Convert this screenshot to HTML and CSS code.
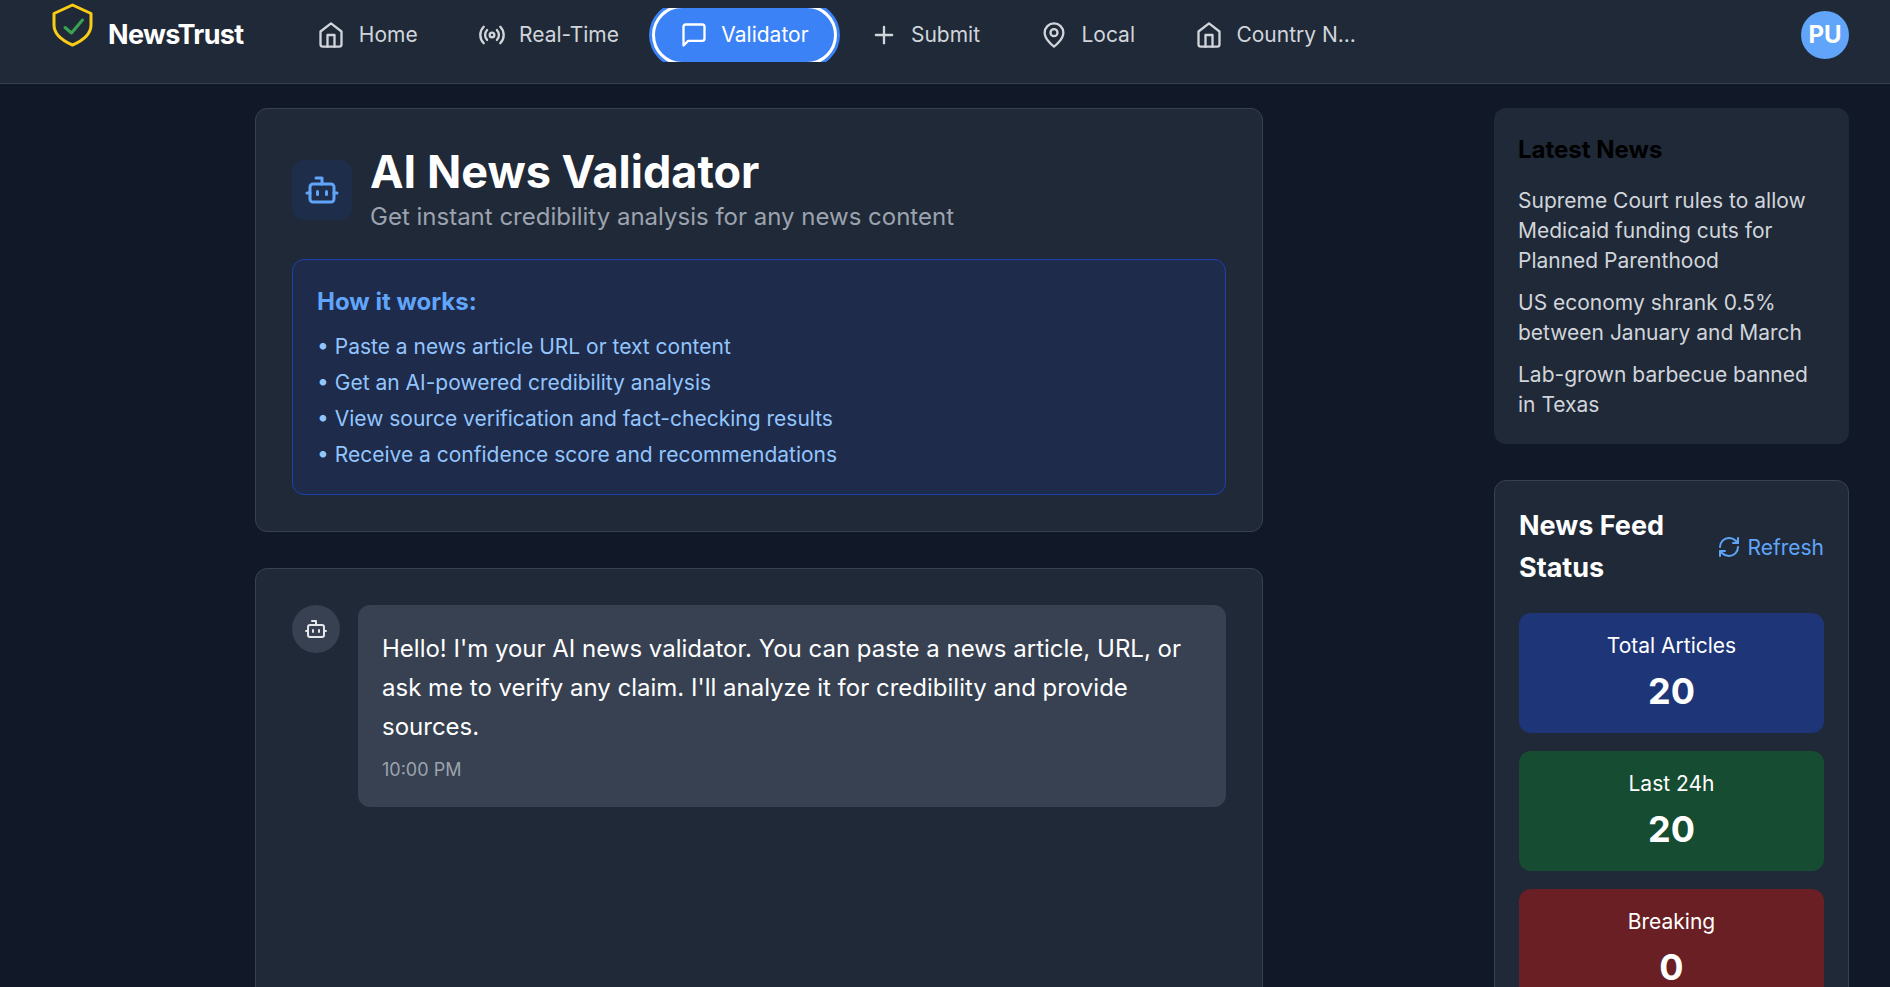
FILE: index.html
```html
<!DOCTYPE html>
<html lang="en">
<head>
  <meta charset="UTF-8" />
  <title>NewsTrust - Validator</title>
  <link rel="stylesheet" href="styles.css">
</head>
<body>

  <!-- Top navigation -->
  <header class="topbar">
    <div class="brand">
      <svg class="brand-icon" viewBox="0 0 42 44" fill="none" stroke-linecap="round" stroke-linejoin="round">
        <path d="M20.500 2 39 10.500V22c0 9-8 15.500-18.500 20C10 37.500 2 31 2 22V10.500Z" stroke="#facc15" stroke-width="3" />
        <path d="m13 24.500 6.500 5.500 11-13" stroke="#3ba24f" stroke-width="3" />
      </svg>
      <span class="brand-name">NewsTrust</span>
    </div>

    <nav class="nav">
      <a class="nav-item">
        <svg class="icon" viewBox="0 0 24 24"><path d="M3 9l9-7 9 7v11a2 2 0 0 1-2 2H5a2 2 0 0 1-2-2z" /><path d="M9 22V12h6v10" /></svg>
        Home
      </a>
      <a class="nav-item">
        <svg class="icon" viewBox="0 0 24 24"><path d="M4.900 19.100C1 15.200 1 8.800 4.900 4.900" /><path d="M7.800 16.200c-2.300-2.300-2.300-6.100 0-8.500" /><circle cx="12" cy="12" r="2" /><path d="M16.200 7.800c2.300 2.300 2.300 6.100 0 8.500" /><path d="M19.100 4.900C23 8.800 23 15.100 19.100 19" /></svg>
        Real-Time
      </a>
      <div class="nav-clip">
        <a class="nav-item active">
          <svg class="icon" viewBox="0 0 24 24"><path d="M21 15a2 2 0 0 1-2 2H7l-4 4V5a2 2 0 0 1 2-2h14a2 2 0 0 1 2 2z" /></svg>
          Validator
        </a>
      </div>
      <a class="nav-item">
        <svg class="icon" viewBox="0 0 24 24"><path d="M5 12h14" /><path d="M12 5v14" /></svg>
        Submit
      </a>
      <a class="nav-item">
        <svg class="icon" viewBox="0 0 24 24"><path d="M20 10c0 6-8 12-8 12s-8-6-8-12a8 8 0 0 1 16 0Z" /><circle cx="12" cy="10" r="3" /></svg>
        Local
      </a>
      <a class="nav-item">
        <svg class="icon" viewBox="0 0 24 24"><path d="M3 9l9-7 9 7v11a2 2 0 0 1-2 2H5a2 2 0 0 1-2-2z" /><path d="M9 22V12h6v10" /></svg>
        Country N...
      </a>
    </nav>

    <div class="avatar">PU</div>
  </header>

  <div class="page">
    <main class="content">

      <!-- Intro card -->
      <section class="card intro">
        <div class="intro-head">
          <div class="intro-icon">
            <svg class="icon" viewBox="0 0 24 24"><path d="M12 8V4H8" /><rect x="4" y="8" width="16" height="12" rx="2" /><path d="M2 14h2" /><path d="M20 14h2" /><path d="M15 13v2" /><path d="M9 13v2" /></svg>
          </div>
          <div>
            <h1>AI News Validator</h1>
            <p class="subtitle">Get instant credibility analysis for any news content</p>
          </div>
        </div>

        <div class="how">
          <h3>How it works:</h3>
          <ul>
            <li>• Paste a news article URL or text content</li>
            <li>• Get an AI-powered credibility analysis</li>
            <li>• View source verification and fact-checking results</li>
            <li>• Receive a confidence score and recommendations</li>
          </ul>
        </div>
      </section>

      <!-- Chat -->
      <section class="card chat">
        <div class="bot-avatar">
          <svg class="icon" viewBox="0 0 24 24"><path d="M12 8V4H8" /><rect x="4" y="8" width="16" height="12" rx="2" /><path d="M2 14h2" /><path d="M20 14h2" /><path d="M15 13v2" /><path d="M9 13v2" /></svg>
        </div>
        <div class="bubble">
          <p>Hello! I'm your AI news validator. You can paste a news article, URL, or ask me to verify any claim. I'll analyze it for credibility and provide sources.</p>
          <span class="time">10:00 PM</span>
        </div>
      </section>
    </main>

    <aside class="sidebar">
      <section class="side-card latest">
        <h2>Latest News</h2>
        <p>Supreme Court rules to allow Medicaid funding cuts for Planned Parenthood</p>
        <p>US economy shrank 0.5% between January and March</p>
        <p>Lab-grown barbecue banned in Texas</p>
      </section>

      <section class="side-card feed">
        <div class="feed-head">
          <h2>News Feed Status</h2>
          <a class="refresh">
            <svg class="icon" viewBox="0 0 24 24"><path d="M3 12a9 9 0 0 1 9-9 9.750 9.750 0 0 1 6.740 2.740L21 8" /><path d="M21 3v5h-5" /><path d="M21 12a9 9 0 0 1-9 9 9.750 9.750 0 0 1-6.740-2.740L3 16" /><path d="M8 16H3v5" /></svg>
            Refresh
          </a>
        </div>
        <div class="stat blue"><span>Total Articles</span><strong>20</strong></div>
        <div class="stat green"><span>Last 24h</span><strong>20</strong></div>
        <div class="stat red"><span>Breaking</span><strong>0</strong></div>
      </section>
    </aside>
  </div>

</body>
</html>
```

FILE: styles.css
```css
* {
  margin: 0;
  padding: 0;
  box-sizing: border-box;
}

body, html {
  height: 100%;
  overflow: hidden;
  font-family: Inter, "Liberation Sans", sans-serif;
  background: #111827;
  color: #fff;
}

.icon {
  fill: none;
  stroke: currentColor;
  stroke-width: 2;
  stroke-linecap: round;
  stroke-linejoin: round;
  flex-shrink: 0;
}

/* Top navigation */
.topbar {
  display: flex;
  align-items: center;
  height: 84px;
  padding: 0 41px 14px 52px;
  background: #1f2937;
  border-bottom: 1px solid #374151;
}

.brand {
  display: flex;
  align-items: center;
  gap: 14px;
}

.brand-icon {
  width: 42px;
  height: 44px;
  margin-top: -19px;
}

.brand-name {
  font-size: 27px;
  font-weight: 700;
  letter-spacing: -0.7px;
}

.nav {
  display: flex;
  align-items: center;
  margin-left: 44px;
}

.nav-item {
  display: flex;
  align-items: center;
  gap: 13.4px;
  padding: 0 30px;
  font-size: 21px;
  color: #d1d5db;
  white-space: nowrap;
}

.nav-item .icon {
  width: 28px;
  height: 28px;
}

.nav-clip {
  display: flex;
  align-items: center;
  height: 54px;
  padding: 0 3px;
  overflow: hidden;
}

.nav-item.active {
  height: 60px;
  padding: 0 25px;
  color: #fff;
  background: #3b82f6;
  border: 3px solid #fff;
  border-radius: 30px;
  box-shadow: 0 0 0 3px #3b82f6;
}

.avatar {
  display: flex;
  align-items: center;
  justify-content: center;
  width: 48px;
  height: 48px;
  margin-left: auto;
  border-radius: 50%;
  background: #60a5fa;
  font-size: 24px;
  font-weight: 700;
}

/* Page layout */
.page {
  display: flex;
  justify-content: space-between;
  padding: 24px 41px 0 255px;
}

.content {
  display: flex;
  flex-direction: column;
  gap: 36px;
  width: 1008px;
}

.card {
  background: #1f2937;
  border: 1px solid #374151;
  border-radius: 12px;
  padding: 36px;
}

.intro-head {
  display: flex;
  align-items: center;
  gap: 18px;
  margin-bottom: 24px;
}

.intro-icon {
  display: flex;
  align-items: center;
  justify-content: center;
  width: 60px;
  height: 60px;
  border-radius: 12px;
  background: #1e2d4a;
  color: #60a5fa;
}

.intro-icon .icon {
  width: 36px;
  height: 36px;
}

h1 {
  font-size: 45px;
  font-weight: 700;
  line-height: 54px;
}

.subtitle {
  font-size: 24px;
  line-height: 36px;
  color: #9ca3af;
}

.how {
  padding: 24px 24px 21px;
  background: #1e2b4b;
  border: 1px solid #1e40af;
  border-radius: 12px;
}

.how h3 {
  font-size: 24px;
  font-weight: 700;
  line-height: 36px;
  margin-bottom: 9px;
  color: #60a5fa;
}

.how ul {
  list-style: none;
}

.how li {
  font-size: 21px;
  line-height: 36px;
  color: #93c5fd;
}

.chat {
  display: flex;
  align-items: flex-start;
  gap: 18px;
  height: 500px;
}

.bot-avatar {
  display: flex;
  align-items: center;
  justify-content: center;
  width: 48px;
  height: 48px;
  border-radius: 50%;
  background: #374151;
  color: #e5e7eb;
  flex-shrink: 0;
}

.bot-avatar .icon {
  width: 24px;
  height: 24px;
}

.bubble {
  flex: 1;
  padding: 24px;
  background: #374151;
  border-radius: 12px;
}

.bubble p {
  font-size: 24px;
  line-height: 39px;
}

.time {
  display: block;
  margin-top: 10px;
  font-size: 18px;
  line-height: 27px;
  color: #9ca3af;
}

/* Sidebar */
.sidebar {
  display: flex;
  flex-direction: column;
  gap: 36px;
  width: 355px;
}

.side-card {
  background: #1f2937;
  border-radius: 12px;
  padding: 24px;
}

.latest h2 {
  font-size: 24px;
  font-weight: 700;
  line-height: 36px;
  margin-bottom: 18px;
  color: #000;
}

.latest p {
  font-size: 21px;
  line-height: 30px;
  color: #d1d5db;
  margin-bottom: 12px;
}

.latest p:last-child {
  margin-bottom: 0;
}

.feed {
  border: 1px solid #374151;
}

.feed-head {
  display: flex;
  align-items: center;
  justify-content: space-between;
  margin-bottom: 24px;
}

.feed-head h2 {
  width: 170px;
  font-size: 27px;
  font-weight: 700;
  line-height: 42px;
}

.refresh {
  display: flex;
  align-items: center;
  gap: 6px;
  font-size: 21px;
  color: #60a5fa;
}

.refresh .icon {
  width: 24px;
  height: 24px;
}

.stat {
  display: flex;
  flex-direction: column;
  align-items: center;
  height: 120px;
  margin-bottom: 18px;
  padding-top: 18px;
  border-radius: 12px;
}

.stat span {
  font-size: 21px;
  line-height: 30px;
}

.stat strong {
  margin-top: 12px;
  font-size: 36px;
  font-weight: 700;
  line-height: 36px;
}

.stat.blue { background: #1e3578; }
.stat.green { background: #164c31; }
.stat.red { background: #691f23; }
```
